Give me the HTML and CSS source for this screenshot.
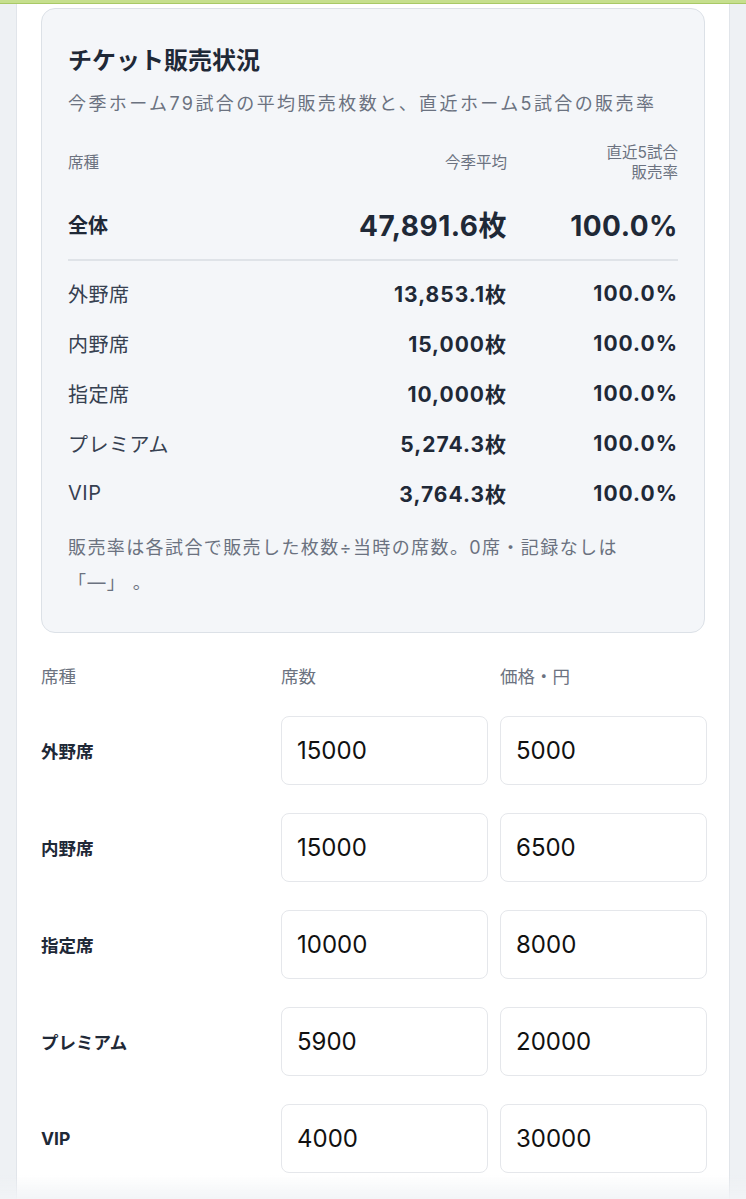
FILE: index.html
```html
<!DOCTYPE html>
<html lang="ja">
<head>
  <meta charset="UTF-8" />
  <meta name="viewport" content="width=device-width, initial-scale=1.0" />
  <title>チケット販売状況</title>
  <link rel="stylesheet" href="styles.css">
</head>
<body>

<div class="top-bar"></div>

<div class="card">
  <div class="panel">
    <h2>チケット販売状況</h2>
    <p class="sub">今季ホーム79試合の平均販売枚数と、直近ホーム5試合の販売率</p>

    <div class="stats head">
      <span>席種</span>
      <span class="num">今季平均</span>
      <span class="num">直近5試合<br>販売率</span>
    </div>

    <div class="stats total">
      <span>全体</span>
      <span class="num">47,891.6枚</span>
      <span class="num">100.0%</span>
    </div>

    <div class="rows">
      <div class="stats"><span>外野席</span><span class="num">13,853.1枚</span><span class="num">100.0%</span></div>
      <div class="stats"><span>内野席</span><span class="num">15,000枚</span><span class="num">100.0%</span></div>
      <div class="stats"><span>指定席</span><span class="num">10,000枚</span><span class="num">100.0%</span></div>
      <div class="stats"><span>プレミアム</span><span class="num">5,274.3枚</span><span class="num">100.0%</span></div>
      <div class="stats"><span>VIP</span><span class="num">3,764.3枚</span><span class="num">100.0%</span></div>
    </div>

    <p class="note">販売率は各試合で販売した枚数÷当時の席数。0席・記録なしは<br>「—」 。</p>
  </div>

  <div class="seat-form">
    <span class="col-head">席種</span>
    <span class="col-head">席数</span>
    <span class="col-head">価格・円</span>

    <label>外野席</label>
    <input type="text" value="15000">
    <input type="text" value="5000">

    <label>内野席</label>
    <input type="text" value="15000">
    <input type="text" value="6500">

    <label>指定席</label>
    <input type="text" value="10000">
    <input type="text" value="8000">

    <label>プレミアム</label>
    <input type="text" value="5900">
    <input type="text" value="20000">

    <label>VIP</label>
    <input type="text" value="4000">
    <input type="text" value="30000">
  </div>
</div>

<div class="fade"></div>

</body>
</html>
```

FILE: styles.css
```css
body {
  margin: 0;
  background-color: #eef1f4;
  font-family: Inter, "Noto Sans CJK JP", sans-serif;
  color: #1f2937;
}
.top-bar {
  height: 3px;
  background: #c6df8e;
  border-bottom: 1px solid #a9c966;
}
.card {
  margin: 0 16px;
  padding: 4px 24px 60px;
  background: #fff;
  border-left: 1px solid #e1e5ea;
  border-right: 1px solid #e1e5ea;
}
.panel {
  background: #f4f6f9;
  border: 1px solid #dce1e7;
  border-radius: 14px;
  padding: 37px 26px 32px;
}
h2 {
  font-size: 24px;
  line-height: 30px;
  font-weight: bold;
  margin: 0;
  color: #1f2937;
}
.sub {
  margin: 15px 0 26px;
  font-size: 18px;
  line-height: 26px;
  letter-spacing: 2.4px;
  color: #6b7280;
}
.stats {
  display: grid;
  grid-template-columns: 1fr auto 171px;
  align-items: center;
}
.stats .num {
  text-align: right;
}
.head {
  font-size: 15.5px;
  line-height: 20px;
  color: #6b7280;
}
.total {
  padding: 23px 0 13px;
  line-height: 40px;
  border-bottom: 2px solid #dfe3e8;
}
.total span {
  font-size: 20px;
  font-weight: bold;
}
.total .num {
  font-size: 28px;
  letter-spacing: 0.5px;
}
.rows {
  padding-top: 7px;
}
.rows .stats {
  height: 50px;
  font-size: 20px;
  letter-spacing: 0.5px;
  color: #374151;
}
.rows .num {
  font-size: 21px;
  font-weight: bold;
  letter-spacing: 1px;
  color: #1f2937;
}
.note {
  margin: 12px 0 0;
  font-size: 18px;
  line-height: 35px;
  letter-spacing: 1.4px;
  color: #6b7280;
}
.seat-form {
  display: grid;
  grid-template-columns: 228px 207px 207px;
  column-gap: 12px;
  row-gap: 28px;
  align-items: center;
  margin-top: 32px;
}
.col-head {
  font-size: 17.5px;
  line-height: 24px;
  color: #6b7280;
  margin-bottom: -1px;
}
.seat-form label {
  font-size: 17.5px;
  font-weight: bold;
  color: #1f2937;
}
.seat-form input {
  box-sizing: border-box;
  width: 100%;
  height: 69px;
  padding: 0 15px;
  border: 1px solid #e5e7eb;
  border-radius: 8px;
  background: #fff;
  font-family: Inter, "Noto Sans CJK JP", sans-serif;
  font-size: 24px;
  color: #111;
}
.fade {
  position: fixed;
  left: 0;
  right: 0;
  bottom: 0;
  height: 24px;
  background: linear-gradient(rgba(241, 243, 246, 0), rgba(241, 243, 246, 0.9));
  pointer-events: none;
}
```
